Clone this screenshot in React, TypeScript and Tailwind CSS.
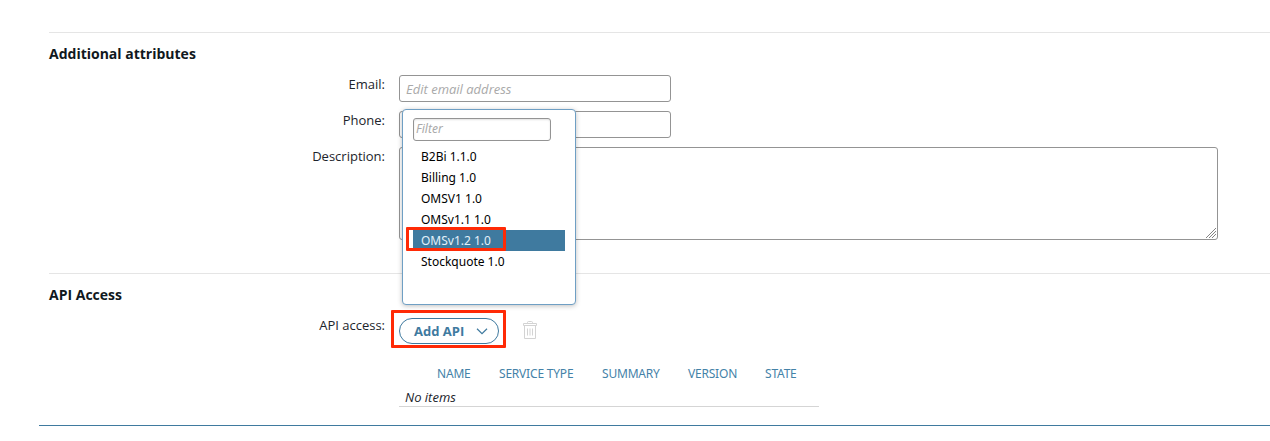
import type { ReactNode } from 'react';

const apis = ['B2Bi 1.1.0', 'Billing 1.0', 'OMSV1 1.0', 'OMSv1.1 1.0', 'OMSv1.2 1.0', 'Stockquote 1.0'];

const columns = [
  { label: 'NAME', width: 'w-[62px]' },
  { label: 'SERVICE TYPE', width: 'w-[103px]' },
  { label: 'SUMMARY', width: 'w-[86px]' },
  { label: 'VERSION', width: 'w-[77px]' },
  { label: 'STATE', width: 'w-[54px]' },
];

function Row({ label, children }: { label: string; children: ReactNode }) {
  return (
    <div className="flex items-start">
      <label className="w-[336px] shrink-0 text-right leading-[18px]">{label}</label>
      <div className="ml-[14px] flex">{children}</div>
    </div>
  );
}

function TrashIcon() {
  return (
    <svg className="mt-[3px] ml-6 h-[19px] w-[14px]" viewBox="0 0 14 19" fill="none" stroke="#d3d3d3">
      <path d="M4.5 2.5V1.5Q4.5 .5 5.5 .5H8.5Q9.5 .5 9.5 1.5V2.5M.5 2.5H13.5V4.5H.5ZM1.5 4.5V17.5H12.5V4.5M4.5 7.5V14.5M7 7.5V14.5M9.5 7.5V14.5" />
    </svg>
  );
}

function ResizeGrip() {
  return (
    <svg className="pointer-events-none absolute right-[2px] bottom-[2px] h-[10px] w-[10px]" viewBox="0 0 10 10" fill="none" stroke="#858585">
      <path d="M0 10 10 0M3 10 10 3M6 10 10 6" />
    </svg>
  );
}

function ApiMenu() {
  return (
    <div className="absolute top-[109px] left-[402px] h-[196px] w-[174px] rounded-[4px] border border-[#6f9fc4] bg-white pt-2 pl-[10px] shadow-[0_1px_5px_rgba(0,0,0,0.25)]">
      <input
        className="block h-[23px] w-[138px] rounded-[3px] border border-[#949494] px-[2px] pb-[2px] font-['Noto_Sans',sans-serif] text-[12px] italic shadow-[inset_0_1px_2px_rgba(0,0,0,0.12)] placeholder:text-[#a9a9a9]"
        placeholder="Filter"
      />
      <ul className="mt-[5px] w-[152px] font-['Noto_Sans',sans-serif] text-[12px] leading-[21px] text-black">
        {apis.map((api) => (
          <li key={api} className={api === 'OMSv1.2 1.0' ? 'bg-[#3f7a9f] pl-2 text-[#e3f1fa]' : 'pl-2'}>
            {api}
          </li>
        ))}
      </ul>
    </div>
  );
}

export default function App() {
  return (
    <main className="relative h-[441px] w-full overflow-hidden bg-white pt-8 font-['Open_Sans',sans-serif] text-[13px] text-[#1c242b]">
      <section className="ml-[49px] h-[241px] border-t border-[#e5e5e5] pt-[11px]">
        <h2 className="text-[14px] leading-5 font-bold text-[#101820]">Additional attributes</h2>
        <div className="mt-[11px] flex flex-col gap-[9px]">
          <Row label="Email:">
            <input
              className="h-[27px] w-[272px] rounded-[3px] border border-[#949494] px-[6px] italic placeholder:text-[#a9a9a9]"
              placeholder="Edit email address"
            />
          </Row>
          <Row label="Phone:">
            <input className="h-[27px] w-[272px] rounded-[3px] border border-[#949494] px-[6px]" />
          </Row>
          <Row label="Description:">
            <div className="relative flex">
              <textarea className="h-[93px] w-[819px] resize-none rounded-[3px] border border-[#949494]" />
              <ResizeGrip />
            </div>
          </Row>
        </div>
      </section>

      <section className="ml-[49px] h-[152px] border-t border-[#e5e5e5] pt-[11px]">
        <h2 className="text-[14px] leading-5 font-bold text-[#101820]">API Access</h2>
        <div className="mt-[11px]">
          <Row label="API access:">
            <div className="flex pt-[2px]">
              <button className="flex h-[26px] w-[100px] items-center rounded-full border border-[#3f7a9f] pt-px pl-[14px] font-bold text-[#3f7a9f]">
                Add API
                <svg className="mb-px ml-[12px] h-[7px] w-[12px]" viewBox="0 0 12 7" fill="none" stroke="#3f7a9f" strokeWidth="1.2">
                  <path d="M1 .8 6 5.7 11 .8" />
                </svg>
              </button>
              <TrashIcon />
            </div>
          </Row>
        </div>
        <div className="mt-5 ml-[350px] h-[43px] w-[420px] border-b border-[#d5d5d5] pt-px font-['Noto_Sans',sans-serif]">
          <div className="flex pl-[38px] text-[12px] leading-[18px] tracking-[-0.2px] text-[#4482a8]">
            {columns.map((column) => (
              <span key={column.label} className={`shrink-0 whitespace-nowrap ${column.width}`}>
                {column.label}
              </span>
            ))}
          </div>
          <div className="mt-[5px] pl-[6px] font-['Open_Sans',sans-serif] leading-[18px] text-[#1c242b] italic">No items</div>
        </div>
      </section>
      <div className="ml-[39px] h-px bg-[#3f7a9f]" />

      <ApiMenu />
      <div className="pointer-events-none absolute top-[227px] left-[406px] h-[24px] w-[100px] rounded-[1px] border-[3px] border-[#ff2a06]" />
      <div className="pointer-events-none absolute top-[309.5px] left-[391px] h-[38px] w-[115px] rounded-[1px] border-[3px] border-[#ff2a06]" />
    </main>
  );
}
